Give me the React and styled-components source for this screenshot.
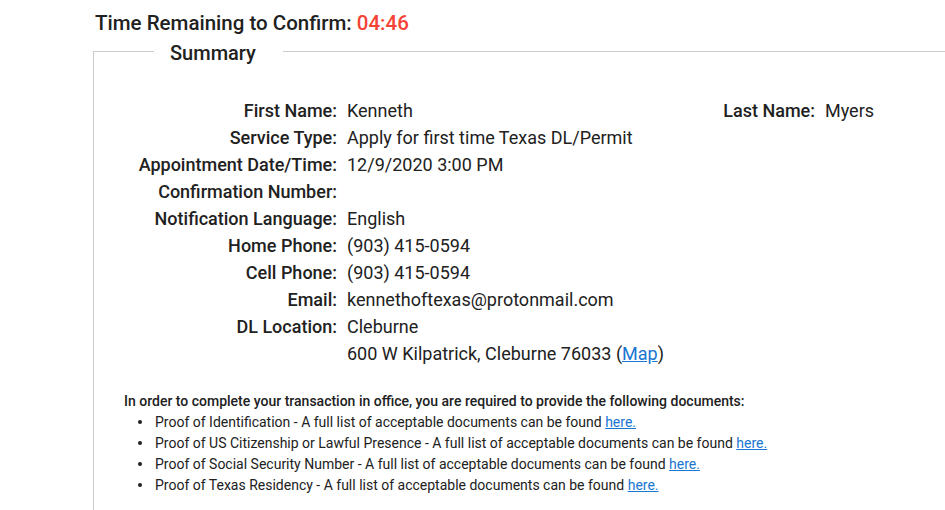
import React from 'react';
import styled, { createGlobalStyle } from 'styled-components';

const GlobalStyle = createGlobalStyle`
  html, body {
    margin: 0;
    padding: 0;
    overflow: hidden;
    background: #fff;
  }
  body {
    font-family: Roboto, "Liberation Sans", sans-serif;
    color: #212121;
  }
`;

const Page = styled.div`
  padding: 11px 0 0 93px;
  height: 510px;
  box-sizing: border-box;
  overflow: hidden;
`;

const Timer = styled.div`
  font-size: 20.5px;
  font-weight: 500;
  line-height: 24px;
  margin-left: 2px;
  margin-bottom: 2px;
`;

const Countdown = styled.span`
  color: #f44336;
`;

const Fieldset = styled.fieldset`
  margin: 0;
  padding: 0 0 30px;
  width: 852px;
  border: 1px solid #cccccc;
  border-right: none;
  border-bottom: none;
  min-height: 470px;
  box-sizing: border-box;
`;

const Legend = styled.legend`
  margin-left: 60px;
  padding: 4px 27px 0 16px;
  font-size: 20px;
  font-weight: 500;
  line-height: 24px;
`;

const Details = styled.div`
  display: grid;
  grid-template-columns: 228px 365px 93px auto;
  column-gap: 10px;
  margin: 32px 0 0 15px;
  font-size: 18px;
  line-height: 27px;
`;

const Label = styled.div`
  text-align: right;
  font-weight: 500;
  white-space: nowrap;
`;

const Value = styled.div`
  white-space: nowrap;
  grid-column: ${(p) => p.$span || 'auto'};
`;

const Link = styled.a`
  color: #1976d2;
  text-decoration: underline;
`;

const Docs = styled.div`
  margin: 24px 0 0 30px;
  font-size: 14px;
  line-height: 21px;
`;

const DocsHeading = styled.div`
  font-weight: 500;
`;

const DocList = styled.ul`
  margin: 0;
  padding-left: 14px;
  list-style: none;

  li::before {
    content: '';
    display: inline-block;
    width: 4px;
    height: 4px;
    border-radius: 50%;
    background: #212121;
    vertical-align: middle;
    margin: 0 13px 2px 0;
  }
`;

const rows = [
  ['Service Type:', 'Apply for first time Texas DL/Permit'],
  ['Appointment Date/Time:', '12/9/2020 3:00 PM'],
  ['Confirmation Number:', ''],
  ['Notification Language:', 'English'],
  ['Home Phone:', '(903) 415-0594'],
  ['Cell Phone:', '(903) 415-0594'],
  ['Email:', 'kennethoftexas@protonmail.com'],
  ['DL Location:', 'Cleburne'],
];

const documents = [
  'Proof of Identification',
  'Proof of US Citizenship or Lawful Presence',
  'Proof of Social Security Number',
  'Proof of Texas Residency',
];

const App = () => (
  <Page>
    <GlobalStyle />
    <Timer>
      Time Remaining to Confirm: <Countdown>04:46</Countdown>
    </Timer>
    <Fieldset>
      <Legend>Summary</Legend>
      <Details>
        <Label>First Name:</Label>
        <Value>Kenneth</Value>
        <Label>Last Name:</Label>
        <Value>Myers</Value>
        {rows.map(([label, value]) => (
          <React.Fragment key={label}>
            <Label>{label}</Label>
            <Value $span="2 / 5">{value}</Value>
          </React.Fragment>
        ))}
        <Label />
        <Value $span="2 / 5">
          600 W Kilpatrick, Cleburne 76033 (<Link href="#">Map</Link>)
        </Value>
      </Details>
      <Docs>
        <DocsHeading>
          In order to complete your transaction in office, you are required to provide the following documents:
        </DocsHeading>
        <DocList>
          {documents.map((doc) => (
            <li key={doc}>
              {doc} - A full list of acceptable documents can be found <Link href="#">here.</Link>
            </li>
          ))}
        </DocList>
      </Docs>
    </Fieldset>
  </Page>
);

export default App;
